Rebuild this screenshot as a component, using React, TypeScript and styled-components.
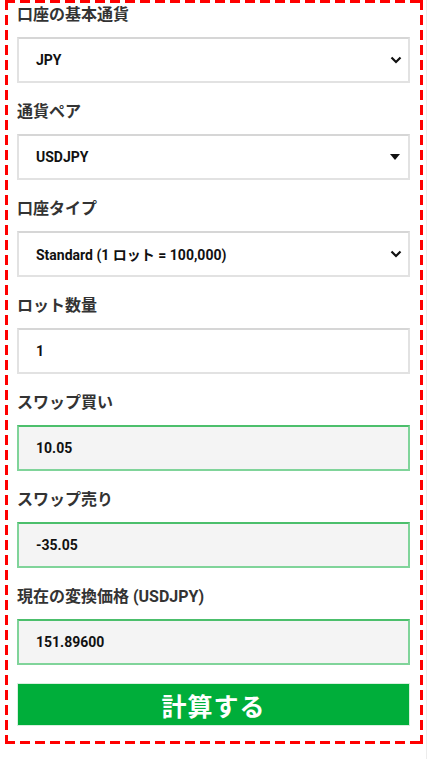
import React from "react";
import styled, { createGlobalStyle } from "styled-components";

const Global = createGlobalStyle`
  html, body { margin: 0; padding: 0; background: #fff; }
  body { font-family: Roboto, "Noto Sans CJK JP", sans-serif; }
  * { box-sizing: border-box; }
`;

const Page = styled.div`
  width: 427px;
  height: 759px;
  padding-left: 5px;
  border-right: 1px solid #ececec;
`;

const RED = "#ff0000";

const Box = styled.div`
  width: 418px;
  padding: 3px 13px 18px 12px;
  display: flex;
  flex-direction: column;
  background:
    repeating-linear-gradient(90deg, ${RED} 0 10px, transparent 10px 15px) left top / 100% 3px no-repeat,
    repeating-linear-gradient(90deg, ${RED} 0 10px, transparent 10px 15px) left bottom / 100% 3px no-repeat,
    repeating-linear-gradient(180deg, ${RED} 0 10px, transparent 10px 15px) left top / 3px 100% no-repeat,
    repeating-linear-gradient(180deg, ${RED} 0 10px, transparent 10px 15px) right top / 3px 100% no-repeat;
`;

const Field = styled.div`
  display: flex;
  flex-direction: column;
  gap: 10px;
  margin-bottom: 17px;
`;

const Label = styled.label`
  font-size: 16px;
  line-height: 24px;
  font-weight: 700;
  color: #333;
`;

const Control = styled.div<{ $green?: boolean }>`
  position: relative;
  height: 46px;
  display: flex;
  align-items: center;
  padding-left: 17px;
  font-size: 14px;
  font-weight: 700;
  color: #111;
  background: ${(p) => (p.$green ? "#f4f4f4" : "#fff")};
  border: 2px solid ${(p) => (p.$green ? "#80d49a" : "#e2e2e2")};
  border-top-color: ${(p) => (p.$green ? "#4cbf6c" : "#d6d6d6")};
`;

const Arrow = styled.span<{ $right: number }>`
  position: absolute;
  right: ${(p) => p.$right}px;
  top: 50%;
  transform: translateY(-50%);
  display: flex;
`;

const Button = styled.button`
  height: 43px;
  margin-top: 1px;
  border: 1px solid #d8f0de;
  background: #00ae3a;
  color: #fff;
  font-family: Roboto, "Noto Sans CJK JP", sans-serif;
  font-size: 25px;
  font-weight: 700;
  letter-spacing: 1px;
  padding: 0;
`;

const Chevron = () => (
  <svg width="12" height="8" viewBox="0 0 12 8">
    <path d="M1.5 1.5 L6 6 L10.5 1.5" fill="none" stroke="#111" strokeWidth="2.2" />
  </svg>
);

const Tri = () => (
  <svg width="10" height="6" viewBox="0 0 10 6">
    <path d="M0 0 H10 L5 6 Z" fill="#111" />
  </svg>
);

type Item = { label: string; value: string; kind: "chev" | "tri" | "plain" | "green" };

const items: Item[] = [
  { label: "口座の基本通貨", value: "JPY", kind: "chev" },
  { label: "通貨ペア", value: "USDJPY", kind: "tri" },
  { label: "口座タイプ", value: "Standard (1 ロット = 100,000)", kind: "chev" },
  { label: "ロット数量", value: "1", kind: "plain" },
  { label: "スワップ買い", value: "10.05", kind: "green" },
  { label: "スワップ売り", value: "-35.05", kind: "green" },
  { label: "現在の変換価格 (USDJPY)", value: "151.89600", kind: "green" },
];

export default function App() {
  return (
    <Page>
      <Global />
      <Box>
        {items.map((it) => (
          <Field key={it.label}>
            <Label>{it.label}</Label>
            <Control $green={it.kind === "green"}>
              {it.value}
              {it.kind === "chev" && (
                <Arrow $right={6}>
                  <Chevron />
                </Arrow>
              )}
              {it.kind === "tri" && (
                <Arrow $right={8}>
                  <Tri />
                </Arrow>
              )}
            </Control>
          </Field>
        ))}
        <Button>計算する</Button>
      </Box>
    </Page>
  );
}
